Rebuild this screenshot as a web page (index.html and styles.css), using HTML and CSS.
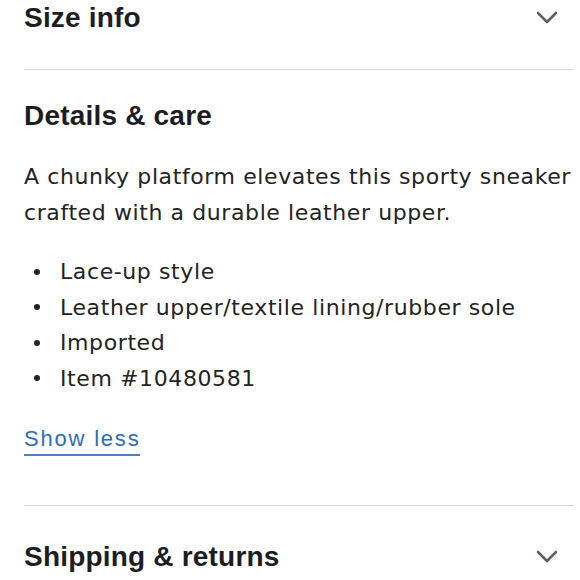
FILE: index.html
```html
<!DOCTYPE html>
<html>
<head>
<meta charset="utf-8">
<link rel="stylesheet" href="styles.css">
</head>
<body>
<div class="panel">
  <section class="item item-first">
    <div class="head">
      <h2 class="title">Size info</h2>
      <svg class="chev" width="22" height="14" viewBox="0 0 22 14"><path d="M2 2 L11 11 L20 2" fill="none" stroke="#5b6266" stroke-width="2.6" stroke-linecap="round" stroke-linejoin="round"/></svg>
    </div>
  </section>
  <section class="item item-open">
    <div class="head">
      <h2 class="title">Details &amp; care</h2>
    </div>
    <p class="desc">A chunky platform elevates this sporty sneaker crafted with a durable leather upper.</p>
    <ul class="bullets">
      <li>Lace-up style</li>
      <li>Leather upper/textile lining/rubber sole</li>
      <li>Imported</li>
      <li>Item #10480581</li>
    </ul>
    <a class="toggle" href="#">Show less</a>
  </section>
  <section class="item item-last">
    <div class="head">
      <h2 class="title">Shipping &amp; returns</h2>
      <svg class="chev" width="22" height="14" viewBox="0 0 22 14"><path d="M2 2 L11 11 L20 2" fill="none" stroke="#5b6266" stroke-width="2.6" stroke-linecap="round" stroke-linejoin="round"/></svg>
    </div>
  </section>
</div>
</body>
</html>
```

FILE: styles.css
```css
html, body {
  margin: 0;
  padding: 0;
  background: #ffffff;
}
body {
  font-family: "Liberation Sans", Arial, sans-serif;
  color: #222222;
}
.panel {
  width: 550px;
  padding-left: 24px;
}
.item {
  border-bottom: 1.5px solid #d3d7d9;
}
.item-first {
  padding-bottom: 33px;
}
.item-open {
  padding-top: 28px;
  padding-bottom: 49px;
}
.item-last {
  border-bottom: none;
  padding-top: 33px;
}
.head {
  display: flex;
  align-items: center;
  justify-content: space-between;
  height: 36px;
}
.title {
  margin: 0;
  font-size: 28px;
  line-height: 36px;
  font-weight: 700;
  letter-spacing: 0.2px;
  color: #1d1d1f;
}
.chev {
  margin-right: 16px;
  display: block;
}
.desc,
.bullets {
  font-family: "DejaVu Sans", "Liberation Sans", sans-serif;
  font-size: 22px;
  line-height: 35.5px;
  letter-spacing: 0.6px;
  color: #232323;
}
.desc {
  margin: 25px 0 0;
}
.bullets {
  margin: 24px 0 0;
  padding: 0;
  list-style: none;
}
.bullets li {
  display: flex;
  align-items: center;
}
.bullets li::before {
  content: "";
  flex: none;
  width: 6px;
  height: 6px;
  border-radius: 50%;
  background: #232323;
  margin-left: 10px;
  margin-right: 20px;
}
.toggle {
  display: inline-block;
  margin-top: 28px;
  font-size: 22px;
  line-height: 30px;
  letter-spacing: 1.8px;
  color: #2f6cb7;
  text-decoration: none;
  border-bottom: 2px solid #4f7fbe;
}
```
